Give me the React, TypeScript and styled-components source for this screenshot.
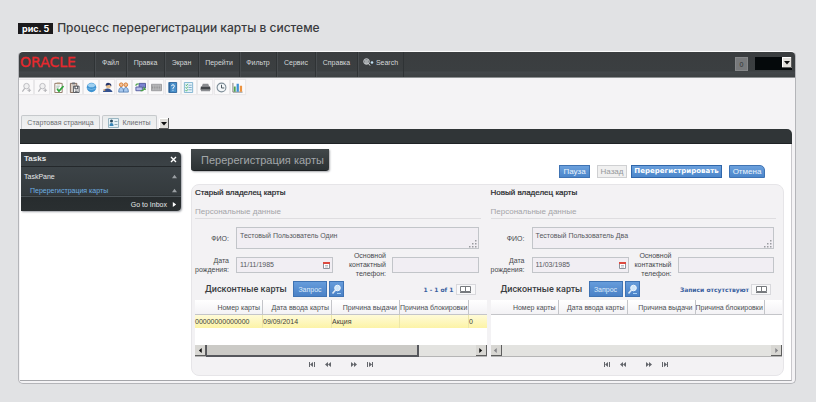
import React from 'react';
import styled, { createGlobalStyle, css } from 'styled-components';

const GlobalStyle = createGlobalStyle`
  * { box-sizing: border-box; }
  body { margin: 0; background: #e1e2e4; }
  button, input, select, textarea { font: inherit; color: inherit; margin: 0; padding: 0; border: 0; border-radius: 0; background: none; }
  h1, h2, h3, p { margin: 0; font: inherit; }
  svg { display: block; flex: none; }
`;

const Page = styled.div`
  padding: 22px 20px 18px 18px;
  font: 7px/9px "Liberation Sans", Arial, sans-serif;
  color: #55585c;
`;
const Caption = styled.div`
  display: flex;
  align-items: center;
  gap: 4px;
  height: 12px;
  margin-bottom: 17px;
  font: 500 12px/12px Inter, sans-serif;
  color: #3a3b3e;
  white-space: nowrap;
`;
const FigureBadge = styled.span`
  padding: 0 4px;
  height: 11px;
  font-size: 9px;
  line-height: 11px;
  font-weight: 700;
  color: #fff;
  background: #1b1a1c;
`;
const Frame = styled.div`
  border: 1px solid #b4b5b9;
  border-top-color: #fafafa;
  border-radius: 5px;
  background: #f4f3f5;
  padding-bottom: 2px;
  overflow: hidden;
`;
const TopBar = styled.header`
  display: flex;
  align-items: stretch;
  height: 26px;
  background: linear-gradient(#3a3d3f 0, #3b3f41 19px, #43474a 20px, #3d4143);
  border-bottom: 1px solid #8d9092;
`;
const Logo = styled.div`
  width: 75px;
  padding: 1px 0 0 1px;
  font: 14px/18px "DejaVu Sans", sans-serif;
  color: #e8282d;
  -webkit-text-stroke: 0.3px #e8282d;
`;
const Menu = styled.nav`
  display: flex;
`;
const MenuItem = styled.button<{ $w: number }>`
  display: flex;
  align-items: center;
  justify-content: center;
  gap: 2px;
  width: ${p => p.$w}px;
  padding-bottom: 5px;
  color: #d3d6d8;
  border-left: 1px solid #2f3335;
  box-shadow: inset 1px 0 #484c4f;
  &:last-child { border-right: 1px solid #2f3335; }
`;
const TopRight = styled.div`
  display: flex;
  gap: 7px;
  margin-left: auto;
  padding: 5px 3px 0 0;
`;
const CountButton = styled.button`
  width: 13px;
  height: 14px;
  background: #77797b;
  border: 1px solid #858789;
  color: #303335;
`;
const UserSelect = styled.div`
  display: flex;
  width: 37px;
  height: 13px;
  background: #05090b;
  position: relative;
  select { appearance: none; width: 100%; outline: 0; }
  svg { position: absolute; right: 0; top: 0; pointer-events: none; }
`;
const Tools = styled.div`
  display: flex;
  justify-content: space-between;
  width: 228px;
  padding: 2px 2px 0 0;
  height: 36px;
`;
const ToolButton = styled.button`
  display: flex;
  align-items: center;
  justify-content: center;
  width: 14px;
  height: 14px;
  background: #faf9fa;
  box-shadow: 0 0 1px 1px #e9e8ea;
`;
const Tabs = styled.div`
  display: flex;
  align-items: flex-end;
  gap: 2px;
  padding-left: 2px;
  height: 15px;
`;
const Tab = styled.button<{ $w: number }>`
  display: flex;
  align-items: center;
  justify-content: center;
  gap: 3px;
  width: ${p => p.$w}px;
  height: 14px;
  color: #6b6d70;
  border: 1px solid #c6c9cc;
  border-bottom: 0;
  border-radius: 2px 2px 0 0;
  background: linear-gradient(#e9ebec, #f2f2f3);
`;
const TabMore = styled.button`
  display: flex;
`;
const Work = styled.div`
  margin: 0 3px 0 1px;
`;
const Band = styled.div`
  height: 15px;
  border-radius: 0 5px 0 0;
  background: #303537;
  border-bottom: 1px solid #1f2325;
`;
const Content = styled.div`
  display: flex;
  align-items: flex-start;
  gap: 10px;
  padding: 0 7px 4px 1px;
  background: #fff;
  border-right: 1px solid #c9c8cc;
  border-bottom: 1px solid #a5a6aa;
`;
const TaskPanel = styled.aside`
  width: 160px;
  flex: none;
  margin-top: 8px;
  color: #e6e8ea;
  border-radius: 0 4px 4px 0;
  background: linear-gradient(#363c40, #3c4347 15px, #343a3d 43px, #272c2e 44px, #2a2f31);
  box-shadow: 1px 1px 2px #9fa2a8;
`;
const TaskRow = styled.div<{ $h: number; $line?: 'top' | 'bottom' }>`
  display: flex;
  align-items: center;
  justify-content: space-between;
  height: ${p => p.$h}px;
  padding: 0 4px 0 3px;
  ${p => p.$line === 'bottom' && css`border-bottom: 1px solid #24282b;`}
  ${p => p.$line === 'top' && css`border-top: 1px solid #4b5256; justify-content: flex-end; gap: 5px;`}
  button { display: flex; }
`;
const TaskTitle = styled.h2`
  font: 700 8px/10px "Liberation Sans", sans-serif;
`;
const TaskLink = styled.a`
  font-size: 7px;
  color: inherit;
  text-decoration: none;
`;
const TaskSubLink = styled(TaskLink)`
  padding-left: 6px;
  color: #6caee2;
`;
const Main = styled.main`
  flex: 1;
  min-width: 0;
`;
const Head = styled.div`
  display: flex;
  justify-content: space-between;
  align-items: flex-end;
  height: 34px;
  padding-right: 19px;
`;
const Title = styled.h1`
  align-self: flex-start;
  width: 138px;
  height: 22px;
  margin-top: 5px;
  padding-left: 10px;
  font-size: 11px;
  line-height: 22px;
  white-space: nowrap;
  color: #a2a6a9;
  border-radius: 0 0 3px 3px;
  background: linear-gradient(#42484a, #2c3234);
  border-bottom: 1px solid #1c2022;
  box-shadow: 1px 1px 2px #a8aaae;
`;
const Actions = styled.div`
  display: flex;
`;
const Action = styled.button<{ $w: number; $gap?: number; $corner?: boolean }>`
  width: ${p => p.$w}px;
  height: 13px;
  margin-left: ${p => p.$gap ?? 0}px;
  font-size: 8px;
  line-height: 11px;
  color: #eaf3fc;
  background: linear-gradient(#6ba0dc, #4b86cb);
  border: 1px solid #3f73b3;
  border-radius: ${p => (p.$corner ? '0 5px 0 0' : '0')};
  &:disabled { color: #96999c; background: #f0f0f0; border-color: #cfd0d2; }
`;
const StrongAction = styled(Action)`
  font: 700 7px/11px "DejaVu Sans", sans-serif;
  border-color: #2f66aa;
  color: #fff;
`;
const Panel = styled.div`
  display: grid;
  grid-template-columns: 1fr 1fr;
  gap: 4px;
  margin-top: 6px;
  padding: 3px 1px 0 3px;
  background: #f3f2f4;
  border: 1px solid #e6e5e8;
  border-radius: 8px;
`;
const Owner = styled.section`
  min-width: 0;
`;
const OwnerTitle = styled.h2`
  font-size: 8px;
  line-height: 10px;
  color: #222528;
  -webkit-text-stroke: 0.2px #222528;
`;
const SectionTitle = styled.h3`
  margin: 9px 6px 8px 0;
  height: 12px;
  font-size: 8px;
  line-height: 10px;
  color: #a3a4a8;
  border-bottom: 1px solid #dedde0;
`;
const Field = styled.div`
  display: flex;
  align-items: center;
  padding-right: 8px;
`;
const Label = styled.label<{ $w: number; $gap: number }>`
  flex: none;
  display: flex;
  justify-content: flex-end;
  width: ${p => p.$w}px;
  margin-right: ${p => p.$gap}px;
  text-align: right;
  color: #46494d;
`;
const box = css`
  border: 1px solid #c2c5c9;
  background: #f1eef3;
  position: relative;
`;
const NameBox = styled.div`
  ${box}
  flex: 1;
  height: 22px;
  textarea { display: block; width: 100%; height: 20px; padding: 3px; resize: none; overflow: hidden; outline: 0; }
  svg { position: absolute; right: 0; bottom: 0; pointer-events: none; }
`;
const DateBox = styled.div`
  ${box}
  display: flex;
  align-items: center;
  flex: none;
  width: 97px;
  height: 16px;
  padding: 0 2px 0 3px;
  input { flex: 1; min-width: 0; outline: 0; }
  button { display: flex; }
`;
const PhoneInput = styled.input`
  ${box}
  flex: 1;
  min-width: 0;
  height: 16px;
`;
const Contact = styled(Field)`
  margin-top: 2px;
  height: 27px;
`;
const CardsBar = styled.div`
  display: flex;
  align-items: center;
  gap: 2px;
  height: 16px;
  margin: 3px 11px 3px 10px;
`;
const CardsTitle = styled.h3`
  width: 86px;
  font: 500 9px/12px Roboto, sans-serif;
  color: #3a3d41;
  white-space: nowrap;
`;
const CardsButton = styled.button<{ $w: number }>`
  display: flex;
  align-items: center;
  justify-content: center;
  width: ${p => p.$w}px;
  height: 16px;
  font-size: 7px;
  color: #dfecfa;
  background: linear-gradient(#669cdb, #4a81c6);
  border: 1px solid #3f73b3;
`;
const CountText = styled.span`
  margin-left: auto;
  font: 700 6px/9px "DejaVu Sans", sans-serif;
  color: #39609f;
  white-space: nowrap;
`;
const BookButton = styled.button`
  display: flex;
  align-items: center;
  justify-content: center;
  width: 20px;
  height: 11px;
  background: #f8f8f9;
  border: 1px solid #d8d8dc;
`;
const Grid = styled.div`
  height: 45px;
  background: #fff;
`;
const Table = styled.table`
  width: 100%;
  table-layout: fixed;
  border-collapse: separate;
  border-spacing: 0;
  white-space: nowrap;
  th {
    height: 15px;
    padding: 0 2px 0 0;
    overflow: hidden;
    font-weight: 400;
    text-align: right;
    color: #4c4f53;
    background: linear-gradient(#fff, #f3f2f5);
    border-right: 1px solid #c4c5c9;
    border-bottom: 1px solid #c4c5c9;
  }
  td {
    height: 13px;
    padding: 0;
    color: #3d3f3a;
    background: linear-gradient(#fffbd8, #fcf3a6);
    border-right: 1px solid #ece6a8;
  }
  th:last-child, td:last-child { border-right: 0; }
`;
const Column = styled.col<{ $w?: number }>`
  ${p => p.$w && css`width: ${p.$w}px;`}
`;
const Scroll = styled.div`
  display: flex;
  height: 12px;
  background: #e3e3e0;
  border-bottom: 1px solid #b5b5b5;
`;
const ScrollButton = styled.button`
  display: flex;
  align-items: center;
  justify-content: center;
  width: 11px;
  height: 11px;
  background: #d8d7d3;
  border: solid #5e5e5e;
  border-width: 0 1px 1px 0;
  color: #111;
  &:disabled { color: #86868a; }
`;
const Track = styled.div`
  flex: 1;
  display: flex;
`;
const Thumb = styled.div`
  width: 79%;
  height: 12px;
  background: #cbcac6;
  border: solid #55575c;
  border-width: 0 2px 2px 1px;
`;
const Pager = styled.div`
  display: flex;
  justify-content: center;
  gap: 10px;
  padding: 5px 0 7px;
  button { display: flex; }
  button:nth-child(3) { margin-left: 10px; }
`;

const Arrow = ({ d, size = 5, fill = 'currentColor' }: { d: string; size?: number; fill?: string }) => (
  <svg width={size} height={size} viewBox="0 0 6 6"><path d={d} fill={fill} /></svg>
);
const DropArrow = () => (
  <svg width="10" height="11" viewBox="0 0 10 11">
    <path d="M0 0h10v11H0z" fill="#e2e0dc" />
    <path d="M.5 10.500V.5h9" stroke="#fff" fill="none" />
    <path d="M9.500 0v10.500H0" stroke="#5d5d5d" fill="none" />
    <path d="M2 4h6L5 7.500z" fill="#111" />
  </svg>
);

const finder = (
  <><circle cx="6" cy="4.500" r="3" fill="#f0f0f1" stroke="#b9b9bd" /><path d="M4 7L1.500 10.500M7 9h4M9 7v4" stroke="#b4b4b8" strokeWidth="1.300" /></>
);
const toolIcons: { name: string; art: React.ReactNode }[] = [
  { name: 'Найти', art: finder },
  { name: 'Найти далее', art: finder },
  { name: 'Проверить', art: <><path d="M2 1.500h8v10H2z" fill="#fff" stroke="#8b7361" /><path d="M4 .5h4v2H4z" fill="#b09a80" /><path d="M3.500 4.500h4M3.500 6.500h3" stroke="#9fb7a8" /><path d="M4.500 7.500l2 2.500 5-5.500" stroke="#2fa53c" strokeWidth="1.800" fill="none" /></> },
  { name: 'Вставить', art: <><path d="M1.500 1.500h7v10h-7z" fill="#d9cfc6" stroke="#7c6455" /><path d="M3.500.5h3v2h-3z" fill="#6b7178" /><path d="M5 4.500h6v7H5z" fill="#fff" stroke="#4d525a" /><path d="M6.500 4.500v3h3v-3M6.500 10h3" stroke="#30353c" fill="none" /></> },
  { name: 'Сеть', art: <><circle cx="6" cy="6" r="5.200" fill="#4094d2" /><ellipse cx="6" cy="3.600" rx="3.800" ry="2.200" fill="#9fd0f0" /><path d="M1.500 7q4 2.500 9 0" stroke="#76b9e6" fill="none" /></> },
  { name: 'Профиль', art: <><circle cx="7" cy="4" r="2.800" fill="#e7c090" /><path d="M4 4q0-3.500 3.500-3t2.500 4L8.500 3z" fill="#24366d" /><path d="M1 11q1-4 5-4t5.500 4z" fill="#34518f" /><path d="M1 8l3 .5-1 1.500z" fill="#e0a050" /></> },
  { name: 'Контакты', art: <><circle cx="3.500" cy="3" r="2" fill="#f6c295" stroke="#d2762c" /><circle cx="8.500" cy="3" r="2" fill="#f6c295" stroke="#d2762c" /><path d="M.8 11q0-5 2.700-5T6 11zM6 11q0-5 2.600-5t2.700 5z" fill="#a9c9ee" stroke="#5c85b9" /></> },
  { name: 'Обмен', art: <><path d="M4.500 1.500h7v5h-7z" fill="#7b83d0" stroke="#4a5399" /><path d="M1 5.500h7v4H1z" fill="#b8bde9" stroke="#525a9f" /><path d="M6 9.500q4 0 4-3l1.500 2M1 4q0-2 3-2" stroke="#4ca04b" strokeWidth="1.400" fill="none" /></> },
  { name: 'Клавиатура', art: <><path d="M.5 2.500h11v7H.5z" fill="#bcbcbe" stroke="#98989b" /><path d="M1 4.500h10M1 6h10M1 7.500h10" stroke="#858588" strokeDasharray="1 1" /></> },
  { name: 'Справка', art: <><path d="M2 .5h8.500v11H2z" fill="#4a91cc" stroke="#2d649a" /><path d="M3 1v10" stroke="#2a5688" /><path d="M5 4.500q0-1.500 1.500-1.500T8 4.500 6.500 6.500v1M6.500 8.500v1" stroke="#fff" fill="none" /></> },
  { name: 'Список', art: <><path d="M1.500.5h9v11h-9z" fill="#e5f3fa" stroke="#7db1cf" /><path d="M6 3.500h3.500M6 6h3.500M6 8.500h3.500" stroke="#7daac8" /><path d="M2.800 3l1 1 1.400-2M2.800 6l1 1 1.400-2M2.800 9l1 1 1.400-2" stroke="#43ad5c" fill="none" /></> },
  { name: 'Печать', art: <><path d="M3 2h6l1 3H2z" fill="#8b8d91" /><path d="M1 5h10l.5 3.500H.5z" fill="#44474b" /><path d="M1 8.500h10v1.500H1z" fill="#8c8e92" /></> },
  { name: 'История', art: <><circle cx="6" cy="6" r="4.800" fill="#f4f7f9" stroke="#7e8d98" strokeWidth="1.200" /><path d="M6 3v3.500h3" stroke="#404a53" fill="none" /></> },
  { name: 'Отчёты', art: <><path d="M1 1v10h10.500" stroke="#777" fill="none" /><path d="M2 5h2v5.500H2z" fill="#4fa34f" /><path d="M5 2h2.500v8.500H5z" fill="#3d8fd6" /><path d="M8.500 4H11v6.500H8.500z" fill="#ec9340" /></> },
];

const menu = [
  { text: 'Файл', w: 32 }, { text: 'Правка', w: 38 }, { text: 'Экран', w: 34 }, { text: 'Перейти', w: 41 },
  { text: 'Фильтр', w: 37 }, { text: 'Сервис', w: 39 }, { text: 'Справка', w: 42 },
];

const pagerIcons = [
  { name: 'Первая', d: 'M0 0h1v5H0zM4 0v5L1 2.500zM5 0h1v5H5z' },
  { name: 'Предыдущая', d: 'M3 0v5L0 2.500zM6 0v5L3 2.500z' },
  { name: 'Следующая', d: 'M0 0v5l3-2.500zM3 0v5l3-2.500z' },
  { name: 'Последняя', d: 'M0 0h1v5H0zM2 0v5l3-2.500zM5 0h1v5H5z' },
];

type OwnerProps = {
  id: string; title: string; name: string; birth: string; labelWidth: number; count: string; rows: string[][];
};

function OwnerCard({ id, title, name, birth, labelWidth, count, rows }: OwnerProps) {
  const filled = rows.length > 0;
  return (
    <Owner>
      <OwnerTitle>{title}</OwnerTitle>
      <SectionTitle>Персональные данные</SectionTitle>
      <Field>
        <Label $w={34} $gap={7} htmlFor={id + '-name'}>ФИО:</Label>
        <NameBox>
          <textarea id={id + '-name'} defaultValue={name} />
          <svg width="9" height="9" viewBox="0 0 9 9">
            <path d="M6 1h1.500v1.500H6zM3 4h1.500v1.500H3zM6 4h1.500v1.500H6zM0 7h1.500v1.500H0zM3 7h1.500v1.500H3zM6 7h1.500v1.500H6z" fill="#9a9ca0" />
          </svg>
        </NameBox>
      </Field>
      <Contact>
        <Label $w={34} $gap={7} htmlFor={id + '-birth'}>Дата<br />рождения:</Label>
        <DateBox>
          <input id={id + '-birth'} defaultValue={birth} />
          <button aria-label="Календарь">
            <svg width="7" height="8" viewBox="0 0 7 8">
              <path d="M.5 1.500h6v6h-6z" fill="#fff" stroke="#8d929b" />
              <path d="M0 1h7v2H0z" fill="#dc4a40" />
              <path d="M2 4.500h3M2 6h3" stroke="#b9bcc4" />
            </svg>
          </button>
        </DateBox>
        <Label $w={labelWidth} $gap={6} htmlFor={id + '-phone'}>Основной<br />контактный<br />телефон:</Label>
        <PhoneInput id={id + '-phone'} />
      </Contact>
      <CardsBar>
        <CardsTitle>Дисконтные карты</CardsTitle>
        <CardsButton $w={34}>Запрос</CardsButton>
        <CardsButton $w={15} aria-label="Поиск">
          <svg width="11" height="11" viewBox="0 0 11 11">
            <circle cx="6.500" cy="4" r="2.800" fill="#cfe6fa" stroke="#eef6fd" />
            <path d="M4.500 6L1.500 9.500" stroke="#dfeaf6" strokeWidth="1.600" />
            <path d="M6 9.500h4" stroke="#a9d2f5" />
          </svg>
        </CardsButton>
        <CountText>{count}</CountText>
        <BookButton aria-label="Показать записи">
          <svg width="11" height="7" viewBox="0 0 11 7">
            <path d="M.5.5h10v5H.5zM5.500.5v5.500M0 6.500h11" fill="#fff" stroke="#777a7e" />
          </svg>
        </BookButton>
      </CardsBar>
      <Grid>
        <Table>
          <colgroup><Column $w={68} /><Column $w={69} /><Column $w={68} /><Column $w={69} /><Column /></colgroup>
          <thead>
            <tr><th>Номер карты</th><th>Дата ввода карты</th><th>Причина выдачи</th><th>Причина блокировки</th><th /></tr>
          </thead>
          <tbody>
            {rows.map(r => <tr key={r[0]}>{r.map((c, i) => <td key={i}>{c}</td>)}</tr>)}
          </tbody>
        </Table>
      </Grid>
      <Scroll>
        <ScrollButton disabled={!filled} aria-label="Прокрутить влево"><Arrow d="M4.500 0v6L1 3z" /></ScrollButton>
        <Track>{filled && <Thumb />}</Track>
        <ScrollButton disabled={!filled} aria-label="Прокрутить вправо"><Arrow d="M1.500 0v6L5 3z" /></ScrollButton>
      </Scroll>
      <Pager>
        {pagerIcons.map(p => (
          <button key={p.name} aria-label={p.name}><Arrow d={p.d} size={6} fill="#63666b" /></button>
        ))}
      </Pager>
    </Owner>
  );
}

export default function App() {
  return (
    <Page>
      <GlobalStyle />
      <Caption><FigureBadge>рис. 5</FigureBadge><span>Процесс перерегистрации карты в системе</span></Caption>
      <Frame>
        <TopBar>
          <Logo>ORACLE</Logo>
          <Menu>
            {menu.map(m => <MenuItem key={m.text} $w={m.w}>{m.text}</MenuItem>)}
            <MenuItem $w={47}>
              <svg width="11" height="8" viewBox="0 0 11 8">
                <circle cx="3.500" cy="3.500" r="2.800" fill="#777c80" stroke="#c3c7ca" />
                <path d="M2 3h3M2 5h3M5.500 5.500L7 7.500" stroke="#d7dadc" />
                <circle cx="9" cy="4.500" r="1.300" fill="#bfe0f2" />
              </svg>
              Search
            </MenuItem>
          </Menu>
          <TopRight>
            <CountButton>0</CountButton>
            <UserSelect>
              <select aria-label="Пользователь"><option /></select>
              <DropArrow />
            </UserSelect>
          </TopRight>
        </TopBar>
        <Tools>
          {toolIcons.map(t => (
            <ToolButton key={t.name} aria-label={t.name}>
              <svg width="11" height="11" viewBox="0 0 12 12" fill="none">{t.art}</svg>
            </ToolButton>
          ))}
        </Tools>
        <Tabs>
          <Tab $w={79}>Стартовая страница</Tab>
          <Tab $w={55}>
            <svg width="11" height="10" viewBox="0 0 11 10">
              <path d="M.5.5h10v9H.5z" fill="#e7f2f7" stroke="#9ab6c2" />
              <circle cx="3.500" cy="3" r="1.500" fill="#26495e" />
              <path d="M1.500 8q0-3 2-3t2 3z" fill="#3a86b7" />
              <path d="M6.500 3.500h3M6.500 6.500h3" stroke="#8fa7b2" />
            </svg>
            Клиенты
          </Tab>
          <TabMore aria-label="Все вкладки"><DropArrow /></TabMore>
        </Tabs>
        <Work>
          <Band />
          <Content>
            <TaskPanel>
              <TaskRow $h={15} $line="bottom">
                <TaskTitle>Tasks</TaskTitle>
                <button aria-label="Закрыть">
                  <svg width="7" height="7" viewBox="0 0 7 7"><path d="M1 1l5 5M6 1L1 6" stroke="#fff" strokeWidth="1.400" /></svg>
                </button>
              </TaskRow>
              <TaskRow $h={18}>
                <TaskLink href="#pane">TaskPane</TaskLink>
                <Arrow d="M3 1l3 4H0z" fill="#9a9fa3" />
              </TaskRow>
              <TaskRow $h={11}>
                <TaskSubLink href="#reissue">Перерегистрация карты</TaskSubLink>
                <Arrow d="M3 1l3 4H0z" fill="#9a9fa3" />
              </TaskRow>
              <TaskRow $h={15} $line="top">
                <TaskLink href="#inbox">Go to Inbox</TaskLink>
                <Arrow d="M1 0l4 3-4 3z" fill="#fff" />
              </TaskRow>
            </TaskPanel>
            <Main>
              <Head>
                <Title>Перерегистрация карты</Title>
                <Actions>
                  <Action $w={31}>Пауза</Action>
                  <Action $w={30} $gap={7} disabled>Назад</Action>
                  <StrongAction $w={91} $gap={4}>Перерегистрировать</StrongAction>
                  <Action $w={36} $gap={7} $corner>Отмена</Action>
                </Actions>
              </Head>
              <Panel>
                <OwnerCard id="old" title="Старый владелец карты" name="Тестовый Пользователь Один" birth="11/11/1985"
                  labelWidth={53} count="1 - 1 of 1" rows={[['00000000000000', '09/09/2014', 'Акция', '', '0']]} />
                <OwnerCard id="new" title="Новый владелец карты" name="Тестовый Пользователь Два" birth="11/03/1985"
                  labelWidth={43} count="Записи отсутствуют" rows={[]} />
              </Panel>
            </Main>
          </Content>
        </Work>
      </Frame>
    </Page>
  );
}
